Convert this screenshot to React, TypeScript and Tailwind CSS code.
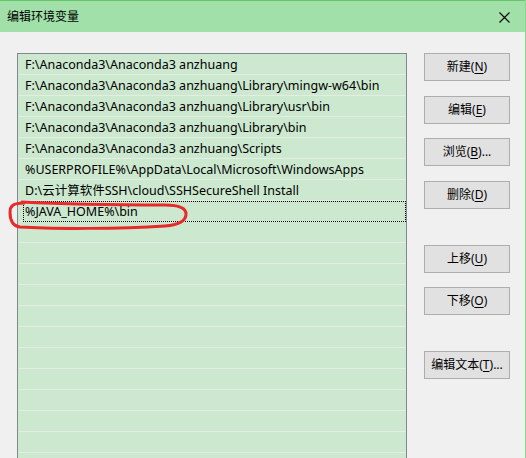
const paths = [
  "F:\\Anaconda3\\Anaconda3 anzhuang",
  "F:\\Anaconda3\\Anaconda3 anzhuang\\Library\\mingw-w64\\bin",
  "F:\\Anaconda3\\Anaconda3 anzhuang\\Library\\usr\\bin",
  "F:\\Anaconda3\\Anaconda3 anzhuang\\Library\\bin",
  "F:\\Anaconda3\\Anaconda3 anzhuang\\Scripts",
  "%USERPROFILE%\\AppData\\Local\\Microsoft\\WindowsApps",
  "D:\\云计算软件SSH\\cloud\\SSHSecureShell Install",
  "%JAVA_HOME%\\bin",
];

const rows = [...paths, ...Array(12).fill("")];

function Btn({ label, hot, tail = "", className = "" }: { label: string; hot: string; tail?: string; className?: string }) {
  return (
    <div
      className={`flex h-[28px] w-[86px] items-center justify-center border border-[#adadad] bg-[#e1e1e1] text-[12px] text-black ${className}`}
    >
      {label}(<span className="underline underline-offset-2">{hot}</span>){tail}
    </div>
  );
}

export default function App() {
  return (
    <div
      className="relative h-[458px] w-[526px] overflow-hidden border-r border-[#8ad88c] bg-[#f0f0f0]"
      style={{ fontFamily: '"Noto Sans", "Noto Sans CJK SC", sans-serif' }}
    >
      {/* title bar */}
      <div className="flex h-[32px] items-center justify-between border-t border-[#66c566] bg-[#a1e0a8] pl-[7px] pr-[15px]">
        <span className="text-[12px] text-black">编辑环境变量</span>
        <svg width="11" height="11" viewBox="0 0 11 11" className="mt-[1px]">
          <path d="M0.5 0.5 L10.5 10.5 M10.5 0.5 L0.5 10.5" stroke="#000" strokeWidth="1.1" />
        </svg>
      </div>

      <div className="flex pl-[17px] pt-[21px]">
        {/* list */}
        <div className="h-[420px] w-[390px] overflow-hidden border border-[#828790] bg-[#cce8cf]">
          {rows.map((r, i) => (
            <div key={i} className="ml-px h-[21px] border-b border-[#e4ece4]">
              {i === 7 ? (
                <div className="ml-[4px] flex h-[21px] items-center border border-dotted border-black pl-[1px] pt-[2px] text-[12.5px] leading-none text-black">
                  {r}
                </div>
              ) : (
                <div className="flex h-[20px] items-center pl-[6px] pt-[2px] text-[12.5px] leading-none whitespace-nowrap text-black">
                  {r}
                </div>
              )}
            </div>
          ))}
        </div>

        {/* buttons */}
        <div className="ml-[17px] flex flex-col">
          <Btn label="新建" hot="N" />
          <Btn label="编辑" hot="E" className="mt-[15px]" />
          <Btn label="浏览" hot="B" tail="..." className="mt-[14px]" />
          <Btn label="删除" hot="D" className="mt-[15px]" />
          <Btn label="上移" hot="U" className="mt-[36px]" />
          <Btn label="下移" hot="O" className="mt-[14px]" />
          <Btn label="编辑文本" hot="T" tail="..." className="mt-[36px]" />
        </div>
      </div>

      {/* red hand-drawn annotation */}
      <svg className="pointer-events-none absolute left-0 top-0" width="526" height="458">
        <path
          d="M22 202 C60 204 120 205 165 205 C179 205 186 208 186 214 C186 221 178 225 165 226 C120 229 50 229 20 227 C12 226 10 220 10 212 C10 206 13 203 24 203"
          fill="none"
          stroke="#e82a2a"
          strokeWidth="3"
          strokeLinecap="round"
        />
      </svg>
    </div>
  );
}
